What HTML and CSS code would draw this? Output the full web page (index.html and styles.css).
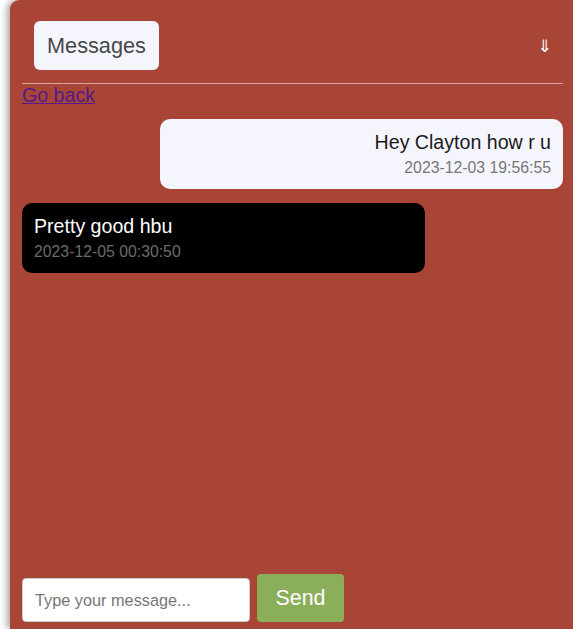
FILE: index.html
```html
<!DOCTYPE html>
<html>
<head>
<meta charset="utf-8">
<link rel="stylesheet" href="styles.css">
</head>
<body>
<div class="panel">
  <div class="header">
    <div class="title">Messages</div>
    <span class="toggle">⇓</span>
  </div>
  <a class="back" href="#">Go back</a>
  <div class="list">
    <div class="bubble mine">
      <div class="text">Hey Clayton how r u</div>
      <div class="time">2023-12-03 19:56:55</div>
    </div>
    <div class="bubble theirs">
      <div class="text">Pretty good hbu</div>
      <div class="time">2023-12-05 00:30:50</div>
    </div>
  </div>
  <div class="composer">
    <input class="input" type="text" placeholder="Type your message...">
    <button class="send">Send</button>
  </div>
</div>
</body>
</html>
```

FILE: styles.css
```css
html, body {
  margin: 0;
  padding: 0;
  background: #ffffff;
  font-family: "Liberation Sans", Arial, sans-serif;
}

.panel {
  margin-left: 10px;
  height: 100vh;
  box-sizing: border-box;
  background: #a84536;
  border-top-left-radius: 9px;
  box-shadow: -3px 0 7px rgba(0, 0, 0, 0.35);
  padding: 0 10px 7px 12px;
  display: flex;
  flex-direction: column;
}

.header {
  display: flex;
  align-items: center;
  justify-content: space-between;
  padding: 21px 11px 13px 12px;
  border-bottom: 1px solid #d6a59c;
}

.title {
  background: #f5f6fd;
  color: #474747;
  font-size: 21.7px;
  line-height: 25px;
  padding: 12px 13px;
  border-radius: 6px;
}

.toggle {
  color: #ffffff;
  font-family: "DejaVu Sans", sans-serif;
  font-size: 17px;
  line-height: 22px;
}

.back {
  align-self: flex-start;
  color: #551a8b;
  font-size: 19.6px;
  line-height: 23px;
}

.list {
  flex: 1;
  display: flex;
  flex-direction: column;
  gap: 14px;
  margin-top: 12px;
}

.bubble {
  width: 403px;
  box-sizing: border-box;
  padding: 12px;
  border-radius: 10px;
}

.bubble .text {
  font-size: 19.6px;
  line-height: 23px;
}

.bubble .time {
  font-size: 15.8px;
  line-height: 18px;
  margin-top: 5px;
}

.mine {
  align-self: flex-end;
  background: #f5f6fd;
  text-align: right;
}

.mine .text {
  color: #1a1a1a;
}

.mine .time {
  color: #777777;
}

.theirs {
  align-self: flex-start;
  background: #000000;
  text-align: left;
}

.theirs .text {
  color: #ffffff;
}

.theirs .time {
  color: #6b6b6b;
}

.composer {
  display: flex;
  align-items: flex-end;
  gap: 7px;
}

.input {
  width: 228px;
  height: 44px;
  box-sizing: border-box;
  border: 1px solid #cccccc;
  border-radius: 4px;
  padding: 0 12px;
  font-family: "Liberation Sans", Arial, sans-serif;
  font-size: 16.3px;
  color: #333333;
  background: #ffffff;
}

.input::placeholder {
  color: #767676;
}

.send {
  height: 48px;
  width: 87px;
  border: none;
  border-radius: 4px;
  background: #8aae59;
  color: #ffffff;
  font-family: "Liberation Sans", Arial, sans-serif;
  font-size: 21.4px;
  padding: 1px 0 0 0;
}
```
